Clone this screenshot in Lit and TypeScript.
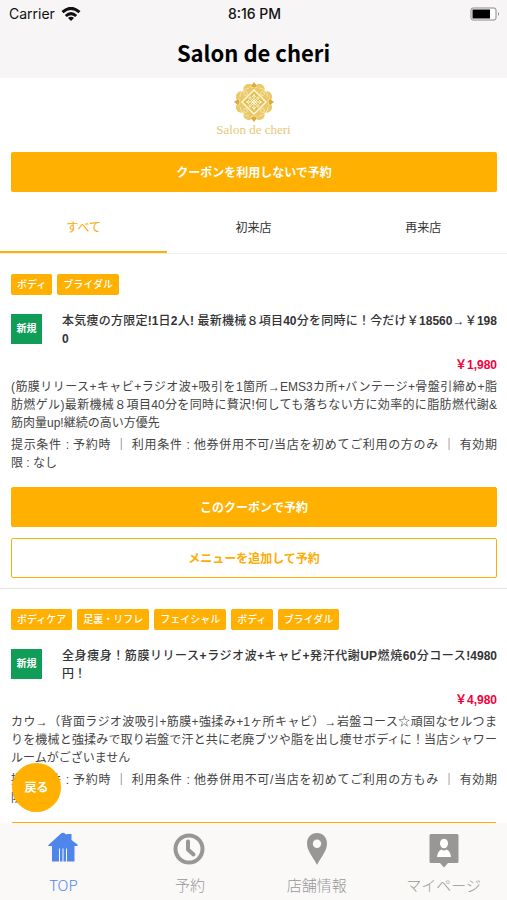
import { LitElement, html, svg, css } from "lit";
import { customElement, property, state } from "lit/decorators.js";
import { classMap } from "lit/directives/class-map.js";

interface Coupon {
  tags: string[];
  title: string[];
  price: string;
  body: string[];
  terms: string[];
}

const COUPONS: Coupon[] = [
  {
    tags: ["ボディ", "ブライダル"],
    title: ["本気痩の方限定!1日2人! 最新機械８項目40分を同時に！今だけ￥18560→￥198", "0"],
    price: "￥1,980",
    body: [
      "(筋膜リリース+キャビ+ラジオ波+吸引を1箇所→EMS3カ所+バンテージ+骨盤引締め+脂",
      "肪燃ゲル)最新機械８項目40分を同時に贅沢!何しても落ちない方に効率的に脂肪燃代謝&",
      "筋肉量up!継続の高い方優先",
    ],
    terms: [
      "提示条件 : 予約時 ｜ 利用条件 : 他券併用不可/当店を初めてご利用の方のみ ｜ 有効期",
      "限 : なし",
    ],
  },
  {
    tags: ["ボディケア", "足裏・リフレ", "フェイシャル", "ボディ", "ブライダル"],
    title: ["全身痩身！筋膜リリース+ラジオ波+キャビ+発汗代謝UP燃焼60分コース!4980", "円！"],
    price: "￥4,980",
    body: [
      "カウ→（背面ラジオ波吸引+筋膜+強揉み+1ヶ所キャビ）→岩盤コース☆頑固なセルつま",
      "りを機械と強揉みで取り岩盤で汗と共に老廃ブツや脂を出し痩せボディに！当店シャワー",
      "ルームがございません",
    ],
    terms: [
      "提示条件 : 予約時 ｜ 利用条件 : 他券併用不可/当店を初めてご利用の方もみ ｜ 有効期",
      "限 : なし",
    ],
  },
];

const lines = (rows: string[]) => rows.map((row) => html`<span class="line">${row}</span>`);

/* Latin letters and digits are heavier than the kana and kanji in headings. */
const headingLines = (rows: string[]) =>
  rows.map(
    (row) =>
      html`<span class="line">${row
        .split(/([\x21-\x7e]+)/)
        .map((part, i) => (i % 2 ? html`<b>${part}</b>` : part))}</span>`
  );

@customElement("coupon-card")
class CouponCard extends LitElement {
  @property({ attribute: false }) coupon!: Coupon;

  static styles = css`
    :host {
      display: block;
      padding: 20px 10px 10px 11px;
      border-bottom: 1px solid #e4e4e4;
      color: #444;
      font-size: 12px;
      line-height: 18px;
    }
    * { box-sizing: border-box; }
    .tags {
      display: flex;
      flex-wrap: wrap;
      gap: 5px;
      margin: 0 0 17px;
      padding: 0;
      list-style: none;
    }
    .tag {
      padding: 0 6px;
      border-radius: 2px;
      background: #ffb000;
      color: #fff;
      font-size: 10px;
      font-weight: 500;
      line-height: 21px;
    }
    .head { display: flex; align-items: flex-start; gap: 20px; }
    .badge {
      flex: none;
      width: 31px;
      margin-top: 2px;
      background: #0f9d58;
      color: #fff;
      font-size: 10px;
      font-weight: 700;
      line-height: 30px;
      text-align: center;
    }
    .title {
      flex: 1;
      margin: 0;
      color: #333;
      font-size: 12px;
      font-weight: 500;
    }
    .title b { font-weight: 700; }
    .line { display: block; white-space: nowrap; text-align-last: justify; }
    .line:last-child { text-align-last: left; }
    .price {
      margin: 8px 0 4px;
      color: #f5003c;
      font-weight: 700;
      text-align: right;
    }
    .text { margin: 0 0 4px; }
    .terms { margin: 0 0 15px; }
    .btn {
      display: block;
      width: 100%;
      height: 40px;
      margin: 0;
      padding: 2px 0 0;
      border: 1px solid #ffb000;
      border-radius: 2px;
      background: #ffb000;
      color: #fff;
      font: inherit;
      font-weight: 700;
    }
    .outline { margin-top: 11px; background: #fff; color: #ffab00; }
  `;

  render() {
    const c = this.coupon;
    return html`
      <ul class="tags">${c.tags.map((t) => html`<li class="tag">${t}</li>`)}</ul>
      <div class="head">
        <span class="badge">新規</span>
        <h2 class="title">${headingLines(c.title)}</h2>
      </div>
      <p class="price">${c.price}</p>
      <p class="text">${lines(c.body)}</p>
      <p class="terms">${lines(c.terms)}</p>
      <button class="btn" type="button">このクーポンで予約</button>
      <button class="btn outline" type="button">メニューを追加して予約</button>
    `;
  }
}

const emblem = html`
  <svg class="emblem" viewBox="-20 -20 40 40" width="40" height="40" aria-hidden="true">
    ${[0, 45, 90, 135, 180, 225, 270, 315].map(
      (a) => svg`<g transform="rotate(${a})">
        <circle cx="5" cy="-13" r="5" fill="#e9c968"/>
        <circle cx="-5" cy="-13" r="5" fill="#e9c968"/>
      </g>`
    )}
    <circle r="15" fill="#e9c968"/>
    ${[0, 90, 180, 270].map(
      (a) => svg`<g transform="rotate(${a})">
        <path d="M0-20L3-16L0-13L-3-16Z" fill="#d9ad3a"/>
        <g fill="none" stroke="#f8e7b0" stroke-width="0.900">
          <path d="M-4-16Q0-12 4-16"/>
          <circle cx="8.500" cy="-8.500" r="2"/>
          <path d="M5-14Q12-14 14-5"/>
        </g>
      </g>`
    )}
    <path d="M0-12L12 0L0 12L-12 0Z" fill="#e4bf55" stroke="#fff6d8" stroke-width="1.500"/>
    ${[0, 90, 180, 270].map(
      (a) => svg`<g transform="rotate(${a})" fill="none" stroke="#fff6d8">
        <path d="M0 0V-8M-2-5L0-7L2-5M-2-3L0-1L2-3" stroke-width="1"/>
        <circle cx="3.800" cy="-3.800" r="1.200" stroke-width="0.900"/>
      </g>`
    )}
  </svg>
`;

const NAV = [
  {
    label: "TOP",
    icon: svg`<path fill="currentColor" d="M3 13.500L15 2.500Q17 1 19 2.500L20.500 4V3H25.500V9L31.500 13.500V15H28.500V30.500H21V17.500H20V30.500H17.500V17.500H16.500V30.500H14V17.500H13V30.500H6V15H2Z"/>`,
  },
  {
    label: "予約",
    icon: svg`<circle cx="16" cy="18" r="13.500" fill="none" stroke="currentColor" stroke-width="4"/>
      <path d="M15 10.500V18.500L20.500 23.500" fill="none" stroke="currentColor" stroke-width="4" stroke-linecap="round" stroke-linejoin="round"/>`,
  },
  {
    label: "店舗情報",
    icon: svg`<path fill="currentColor" fill-rule="evenodd" d="M17 2C11 2 7 6.500 7 12.500C7 20 13 26 17 34C21 26 27 20 27 12.500C27 6.500 23 2 17 2ZM17 8.500A4.200 4.200 0 1 1 17 16.900A4.200 4.200 0 1 1 17 8.500Z"/>`,
  },
  {
    label: "マイページ",
    icon: svg`<path fill="currentColor" d="M4 3H30A1.500 1.500 0 0 1 31.500 4.500V30.500A1.500 1.500 0 0 1 30 32H21L17 36.500L13 32H4A1.500 1.500 0 0 1 2.500 30.500V4.500A1.500 1.500 0 0 1 4 3Z"/>
      <ellipse cx="17" cy="12.500" rx="4" ry="4.800" fill="#fff"/>
      <path d="M10 26Q10.500 20 14.500 18.500Q17 20.500 19.500 18.500Q23.500 20 24 26Z" fill="#fff"/>`,
  },
];

@customElement("app-root")
class AppRoot extends LitElement {
  @state() private tab = 0;
  @state() private page = 0;

  static styles = css`
    :host {
      display: flex;
      flex-direction: column;
      height: 100vh;
      overflow: hidden;
      background: #fff;
      color: #333;
      font-family: "Liberation Sans", "Noto Sans CJK JP", sans-serif;
      font-size: 12px;
      line-height: 18px;
    }
    * { box-sizing: border-box; }
    button { font: inherit; margin: 0; padding: 0; border: 0; }
    .top { flex: none; background: #f7f5f6; color: #111; }
    .status {
      display: grid;
      grid-template-columns: 1fr auto 1fr;
      align-items: center;
      height: 28px;
      padding: 0 7px 0 9px;
      font-family: Inter, sans-serif;
      font-size: 14px;
    }
    .carrier { display: flex; align-items: center; gap: 6px; }
    .clock { font-weight: 500; }
    .battery { justify-self: end; }
    .name {
      margin: 0;
      padding-bottom: 2px;
      color: #000;
      font-family: "Noto Sans CJK JP", sans-serif;
      font-size: 22px;
      font-weight: 700;
      line-height: 48px;
      text-align: center;
    }
    .stage { position: relative; flex: 1; min-height: 0; display: flex; }
    .scroll { flex: 1; overflow-y: auto; scrollbar-width: none; }
    .brand {
      display: flex;
      flex-direction: column;
      align-items: center;
      padding-top: 4px;
      color: #e6c878;
      font-family: "Liberation Serif", serif;
      font-size: 13px;
      line-height: 15px;
    }
    .skip {
      display: block;
      width: calc(100% - 21px);
      height: 40px;
      margin: 15px 10px 10px 11px;
      padding-top: 2px;
      border-radius: 2px;
      background: #ffb000;
      color: #fff;
      font-weight: 700;
    }
    .tabs { display: grid; grid-template-columns: 33fr 34fr 33fr; border-bottom: 1px solid #eee; }
    .tab {
      height: 51px;
      padding-top: 2px;
      border-bottom: 2px solid transparent;
      background: none;
      color: #333;
    }
    .tab.on { border-color: #ffb000; color: #ffa500; }
    .back {
      position: absolute;
      left: 12px;
      bottom: 11px;
      width: 49px;
      height: 49px;
      border-radius: 50%;
      background: #ffb000;
      color: #fff;
      font-weight: 700;
    }
    .nav {
      flex: none;
      display: grid;
      grid-template-columns: repeat(4, 1fr);
      background: #faf9f8;
      font-family: "Noto Sans CJK JP", sans-serif;
      font-size: 15px;
      font-weight: 300;
    }
    .item {
      display: flex;
      flex-direction: column;
      align-items: center;
      gap: 4px;
      height: 77px;
      padding-top: 8px;
      color: #999795;
      line-height: 24px;
      text-decoration: none;
    }
    .item.on { color: #4f86ec; }
  `;

  render() {
    return html`
      <header class="top">
        <div class="status">
          <span class="carrier">Carrier
            <svg width="20" height="15" viewBox="0 0 20 15" aria-hidden="true">
              <g fill="none" stroke="#111" stroke-width="3">
                <path d="M1.500 5.200Q10-2.500 18.500 5.200"/>
                <path d="M4.800 9Q10 4.300 15.200 9"/>
              </g>
              <path d="M10 14L7 11Q10 8.500 13 11Z" fill="#111"/>
            </svg>
          </span>
          <span class="clock">8:16 PM</span>
          <svg class="battery" width="30" height="14" viewBox="0 0 30 14" aria-hidden="true">
            <rect x="1" y="1" width="25" height="12" rx="2" fill="#fff" stroke="#888"/>
            <rect x="2.500" y="2.500" width="17.500" height="9" fill="#000"/>
            <path d="M28 5Q30 7 28 9Z" fill="#888"/>
          </svg>
        </div>
        <h1 class="name">Salon de cheri</h1>
      </header>
      <div class="stage">
        <main class="scroll">
          <div class="brand">${emblem}<span>Salon de cheri</span></div>
          <button class="skip" type="button">クーポンを利用しないで予約</button>
          <div class="tabs" role="tablist">
            ${["すべて", "初来店", "再来店"].map(
              (t, i) => html`<button
                type="button"
                role="tab"
                aria-selected=${this.tab === i}
                class=${classMap({ tab: true, on: this.tab === i })}
                @click=${() => (this.tab = i)}
              >${t}</button>`
            )}
          </div>
          ${COUPONS.map((c) => html`<coupon-card .coupon=${c}></coupon-card>`)}
        </main>
        <button class="back" type="button">戻る</button>
      </div>
      <nav class="nav">
        ${NAV.map(
          (n, i) => html`<a
            href="#"
            class=${classMap({ item: true, on: this.page === i })}
            @click=${(e: Event) => { e.preventDefault(); this.page = i; }}
          ><svg width="34" height="38" viewBox="0 0 34 38" aria-hidden="true">${n.icon}</svg><span>${n.label}</span></a>`
        )}
      </nav>
    `;
  }
}
